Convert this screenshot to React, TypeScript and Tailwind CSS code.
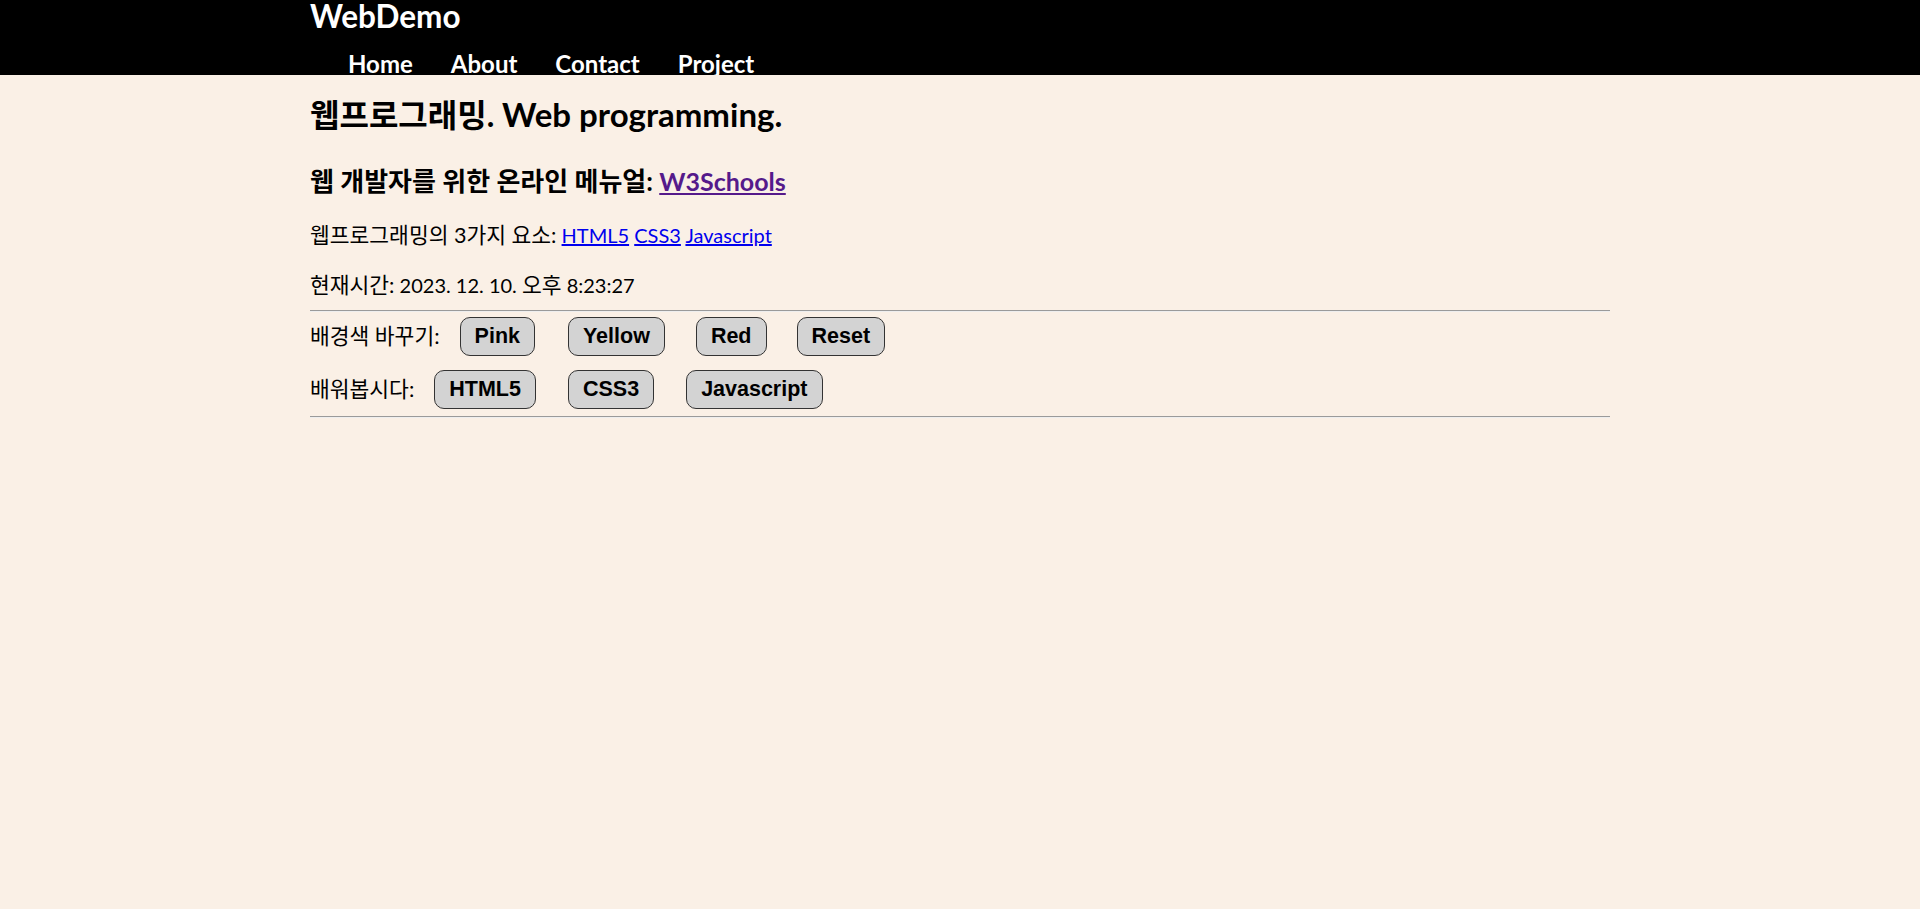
import React from "react";

const KR = 'Lato, "Noto Sans CJK KR", sans-serif';

function Btn({ children, className = "" }: { children: React.ReactNode; className?: string }) {
  return (
    <button
      className={`h-[39px] px-[14px] rounded-[10px] border border-[#333] bg-[#d3d3d3] text-[21.5px] font-bold text-black leading-none ${className}`}
      style={{ fontFamily: '"Liberation Sans", Arial, sans-serif' }}
    >
      {children}
    </button>
  );
}

function K({ children }: { children: React.ReactNode }) {
  return <span className="text-[21.5px]">{children}</span>;
}

export default function App() {
  return (
    <div className="min-h-[909px] bg-[#faf0e6] text-black" style={{ fontFamily: KR }}>
      <header className="h-[75px] bg-black overflow-hidden">
        <div className="w-[1300px] mx-auto text-white font-bold">
          <div className="text-[31.5px] leading-[30px] pt-[1px]">WebDemo</div>
          <ul className="flex gap-[38px] pl-[38px] text-[24px] leading-[34px] mt-[16px]">
            <li>Home</li>
            <li>About</li>
            <li>Contact</li>
            <li>Project</li>
          </ul>
        </div>
      </header>
      <main className="w-[1300px] mx-auto">
        <h1 className="mt-[21px] text-[32px] leading-[36px] font-bold">
          웹프로그래밍. <span className="text-[33px]">Web programming.</span>
        </h1>
        <h2 className="mt-[32px] text-[26px] leading-[32px] font-bold">
          웹 개발자를 위한 온라인 메뉴얼: <a href="#" className="text-[#551a8b] underline text-[25px]">W3Schools</a>
        </h2>
        <p className="mt-[24px] text-[20px] leading-[28px]">
          <K>웹프로그래밍의 3가지 요소:</K> <a href="#" className="text-[#0000ee] underline">HTML5</a>{" "}
          <a href="#" className="text-[#0000ee] underline">CSS3</a>{" "}
          <a href="#" className="text-[#0000ee] underline">Javascript</a>
        </p>
        <p className="mt-[22px] text-[20px] leading-[28px]">
          <K>현재시간:</K> 2023. 12. 10. <K>오후</K> 8:23:27
        </p>
        <hr className="mt-[11px] border-0 border-t border-t-[#9a9a9a] border-b border-b-[#eeeeee]" />
        <div className="mt-[5px] flex items-center text-[21.5px]">
          <span>배경색 바꾸기:</span>
          <Btn className="ml-[20px]">Pink</Btn>
          <Btn className="ml-[33px]">Yellow</Btn>
          <Btn className="ml-[31px]">Red</Btn>
          <Btn className="ml-[30px]">Reset</Btn>
        </div>
        <div className="mt-[14px] flex items-center text-[21.5px]">
          <span>배워봅시다:</span>
          <Btn className="ml-[20px]">HTML5</Btn>
          <Btn className="ml-[32px]">CSS3</Btn>
          <Btn className="ml-[32px]">Javascript</Btn>
        </div>
        <hr className="mt-[7px] border-0 border-t border-t-[#9a9a9a] border-b border-b-[#eeeeee]" />
      </main>
    </div>
  );
}
